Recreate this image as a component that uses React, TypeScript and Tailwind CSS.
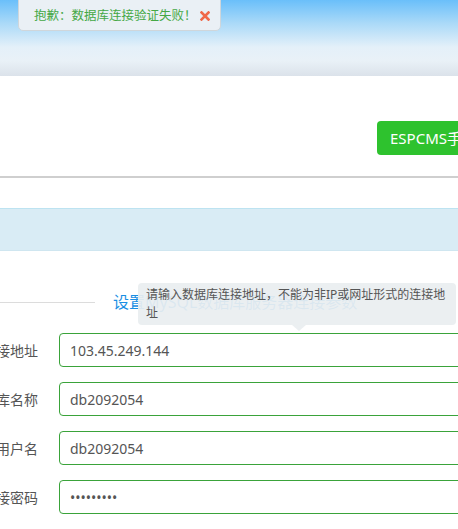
import React from "react";

const font = { fontFamily: '"Noto Sans", "Noto Sans CJK SC", sans-serif' };

function Row({ label, value, type = "text", children }: { label: string; value: string; type?: string; children?: React.ReactNode }) {
  return (
    <div className="flex items-center h-[34px] mb-[15px]">
      <div className="w-[38px] shrink-0 flex justify-end">
        <span className="shrink-0 whitespace-nowrap text-[14px] text-[#555]">{label}</span>
      </div>
      <div className="relative ml-[21px] w-[420px] shrink-0 h-[34px]">
        {children}
        <input
          readOnly
          type={type}
          value={value}
          className="w-full h-full rounded-[4px] border border-[#3aa33a] bg-white pl-[10px] text-[14px] text-[#555] outline-none"
          style={font}
        />
      </div>
    </div>
  );
}

export default function App() {
  return (
    <div className="w-[458px] h-[529px] overflow-hidden bg-white relative" style={font}>
      {/* header */}
      <div className="relative h-[76px] bg-[linear-gradient(to_bottom,#6abffa_0%,#a9d9f8_30%,#e4f0f9_62%,#e9f1f7_80%,#dbe2ea_100%)]">
        <div className="absolute left-[18px] top-[-6px] w-[203px] h-[37px] rounded-b-[5px] border border-[#cfd6db] bg-[#eaf0f5] flex items-end pb-[5px] pl-[15px]">
          <span className="w-[166px] shrink-0 text-[12.5px] text-[#45a845] whitespace-nowrap leading-[18px]">抱歉：数据库连接验证失败！</span>
          <span className="mb-[4px]">
            <svg width="10" height="10" viewBox="0 0 10 10">
              <path d="M1.5 1.5 L8.5 8.5 M8.5 1.5 L1.5 8.5" stroke="#f0694a" strokeWidth="2.6" strokeLinecap="square" />
            </svg>
          </span>
        </div>
      </div>

      {/* white toolbar area */}
      <div className="h-[100px] pt-[45px] pl-[377px] overflow-hidden">
        <div className="w-[120px] h-[34px] rounded-[4px] bg-[#2ec22e] flex items-center pl-[13px] whitespace-nowrap text-[15px] text-white">
          ESPCMS手册
        </div>
      </div>
      <div className="h-[2px] bg-[#cfcfcf]" />
      <div className="h-[30px]" />
      <div className="h-[43px] border-t border-[#bde3f1] border-b border-b-[#cfe6f0] bg-[#d9ecf5]" />

      {/* section title */}
      <div className="mt-[39px] flex items-center h-[24px]">
        <div className="w-[95px] h-px bg-[#dcdcdc]" />
        <span className="ml-[18px] whitespace-nowrap text-[16px] text-[#1a8fe3]">设置MySQL数据库服务器连接参数</span>
      </div>

      {/* form */}
      <div className="mt-[19px]">
        <Row label="数据库连接地址" value="103.45.249.144">
          <div className="absolute left-[79px] bottom-[42px] w-[318px] z-10">
            <div className="rounded-[4px] bg-[rgba(234,238,240,0.93)] px-[8px] py-[3px] text-[12px] leading-[18px] text-[#555]">
              请输入数据库连接地址，不能为非IP或网址形式的连接地址
            </div>
            <div className="absolute left-[154px] -bottom-[6px] w-0 h-0 border-l-[7px] border-r-[7px] border-t-[6px] border-l-transparent border-r-transparent border-t-[rgba(234,238,240,0.93)]" />
          </div>
        </Row>
        <Row label="数据库名称" value="db2092054" />
        <Row label="数据库用户名" value="db2092054" />
        <Row label="数据库连接密码" value="123456789" type="password" />
      </div>
    </div>
  );
}
